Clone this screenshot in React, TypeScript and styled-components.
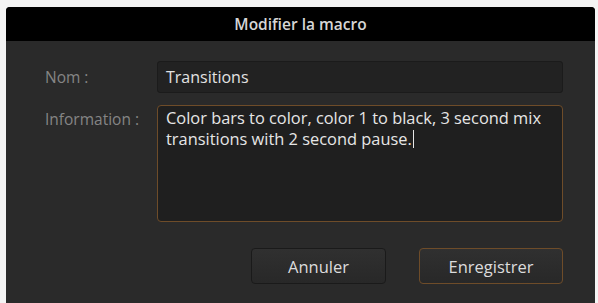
import styled, { createGlobalStyle } from "styled-components";

const GlobalStyle = createGlobalStyle`
  html, body {
    margin: 0;
    padding: 0;
    background: #f4f4f4;
    overflow: hidden;
  }
  body {
    font-family: "Open Sans", "Noto Sans", sans-serif;
  }
`;

const Dialog = styled.div`
  margin: 7px 3px 0 6px;
  height: 296px;
  background: #2a2a2a;
  border-radius: 4px 4px 0 0;
  overflow: hidden;
  display: flex;
  flex-direction: column;
`;

const TitleBar = styled.div`
  height: 34px;
  background: #000;
  display: flex;
  align-items: center;
  justify-content: center;
  color: #d6d6d6;
  font-size: 15.5px;
  font-weight: 600;
`;

const Form = styled.div`
  display: grid;
  grid-template-columns: 112px 406px;
  row-gap: 12px;
  padding: 20px 0 0 39px;
`;

const Label = styled.div<{ $top?: boolean }>`
  color: #858585;
  font-size: 15.5px;
  display: flex;
  align-items: ${(p) => (p.$top ? "flex-start" : "center")};
  padding-top: ${(p) => (p.$top ? "3px" : "0")};
`;

const Input = styled.div`
  height: 32px;
  box-sizing: border-box;
  background: #222;
  border: 1px solid #1b1b1b;
  border-radius: 3px;
  display: flex;
  align-items: center;
  padding-left: 8px;
  color: #e2e2e2;
  font-size: 16px;
`;

const TextArea = styled.div`
  height: 117px;
  box-sizing: border-box;
  background: #1f1f1f;
  border: 1.5px solid #6e4c29;
  border-radius: 4px;
  padding: 1px 8px;
  color: #e6e6e6;
  font-size: 16.4px;
  line-height: 21px;
`;

const Caret = styled.span`
  display: inline-block;
  width: 1px;
  height: 18px;
  background: #e6e6e6;
  vertical-align: -3px;
  margin-left: 1px;
`;

const Actions = styled.div`
  display: flex;
  justify-content: flex-end;
  gap: 33px;
  padding: 26px 32px 0 0;
`;

const Button = styled.div<{ $primary?: boolean; $w: number }>`
  width: ${(p) => p.$w}px;
  height: 36px;
  box-sizing: border-box;
  background: linear-gradient(#303030, #282828);
  border: 1.5px solid ${(p) => (p.$primary ? "#6e4c29" : "#1a1a1a")};
  border-radius: 4px;
  display: flex;
  align-items: center;
  justify-content: center;
  color: #dcdcdc;
  font-size: 16.5px;
`;

export default function App() {
  return (
    <>
      <GlobalStyle />
      <Dialog>
        <TitleBar>Modifier la macro</TitleBar>
        <Form>
          <Label>Nom :</Label>
          <Input>Transitions</Input>
          <Label $top>Information :</Label>
          <TextArea>
            Color bars to color, color 1 to black, 3 second mix transitions with 2 second pause.
            <Caret />
          </TextArea>
        </Form>
        <Actions>
          <Button $w={135}>Annuler</Button>
          <Button $w={144} $primary>
            Enregistrer
          </Button>
        </Actions>
      </Dialog>
    </>
  );
}
